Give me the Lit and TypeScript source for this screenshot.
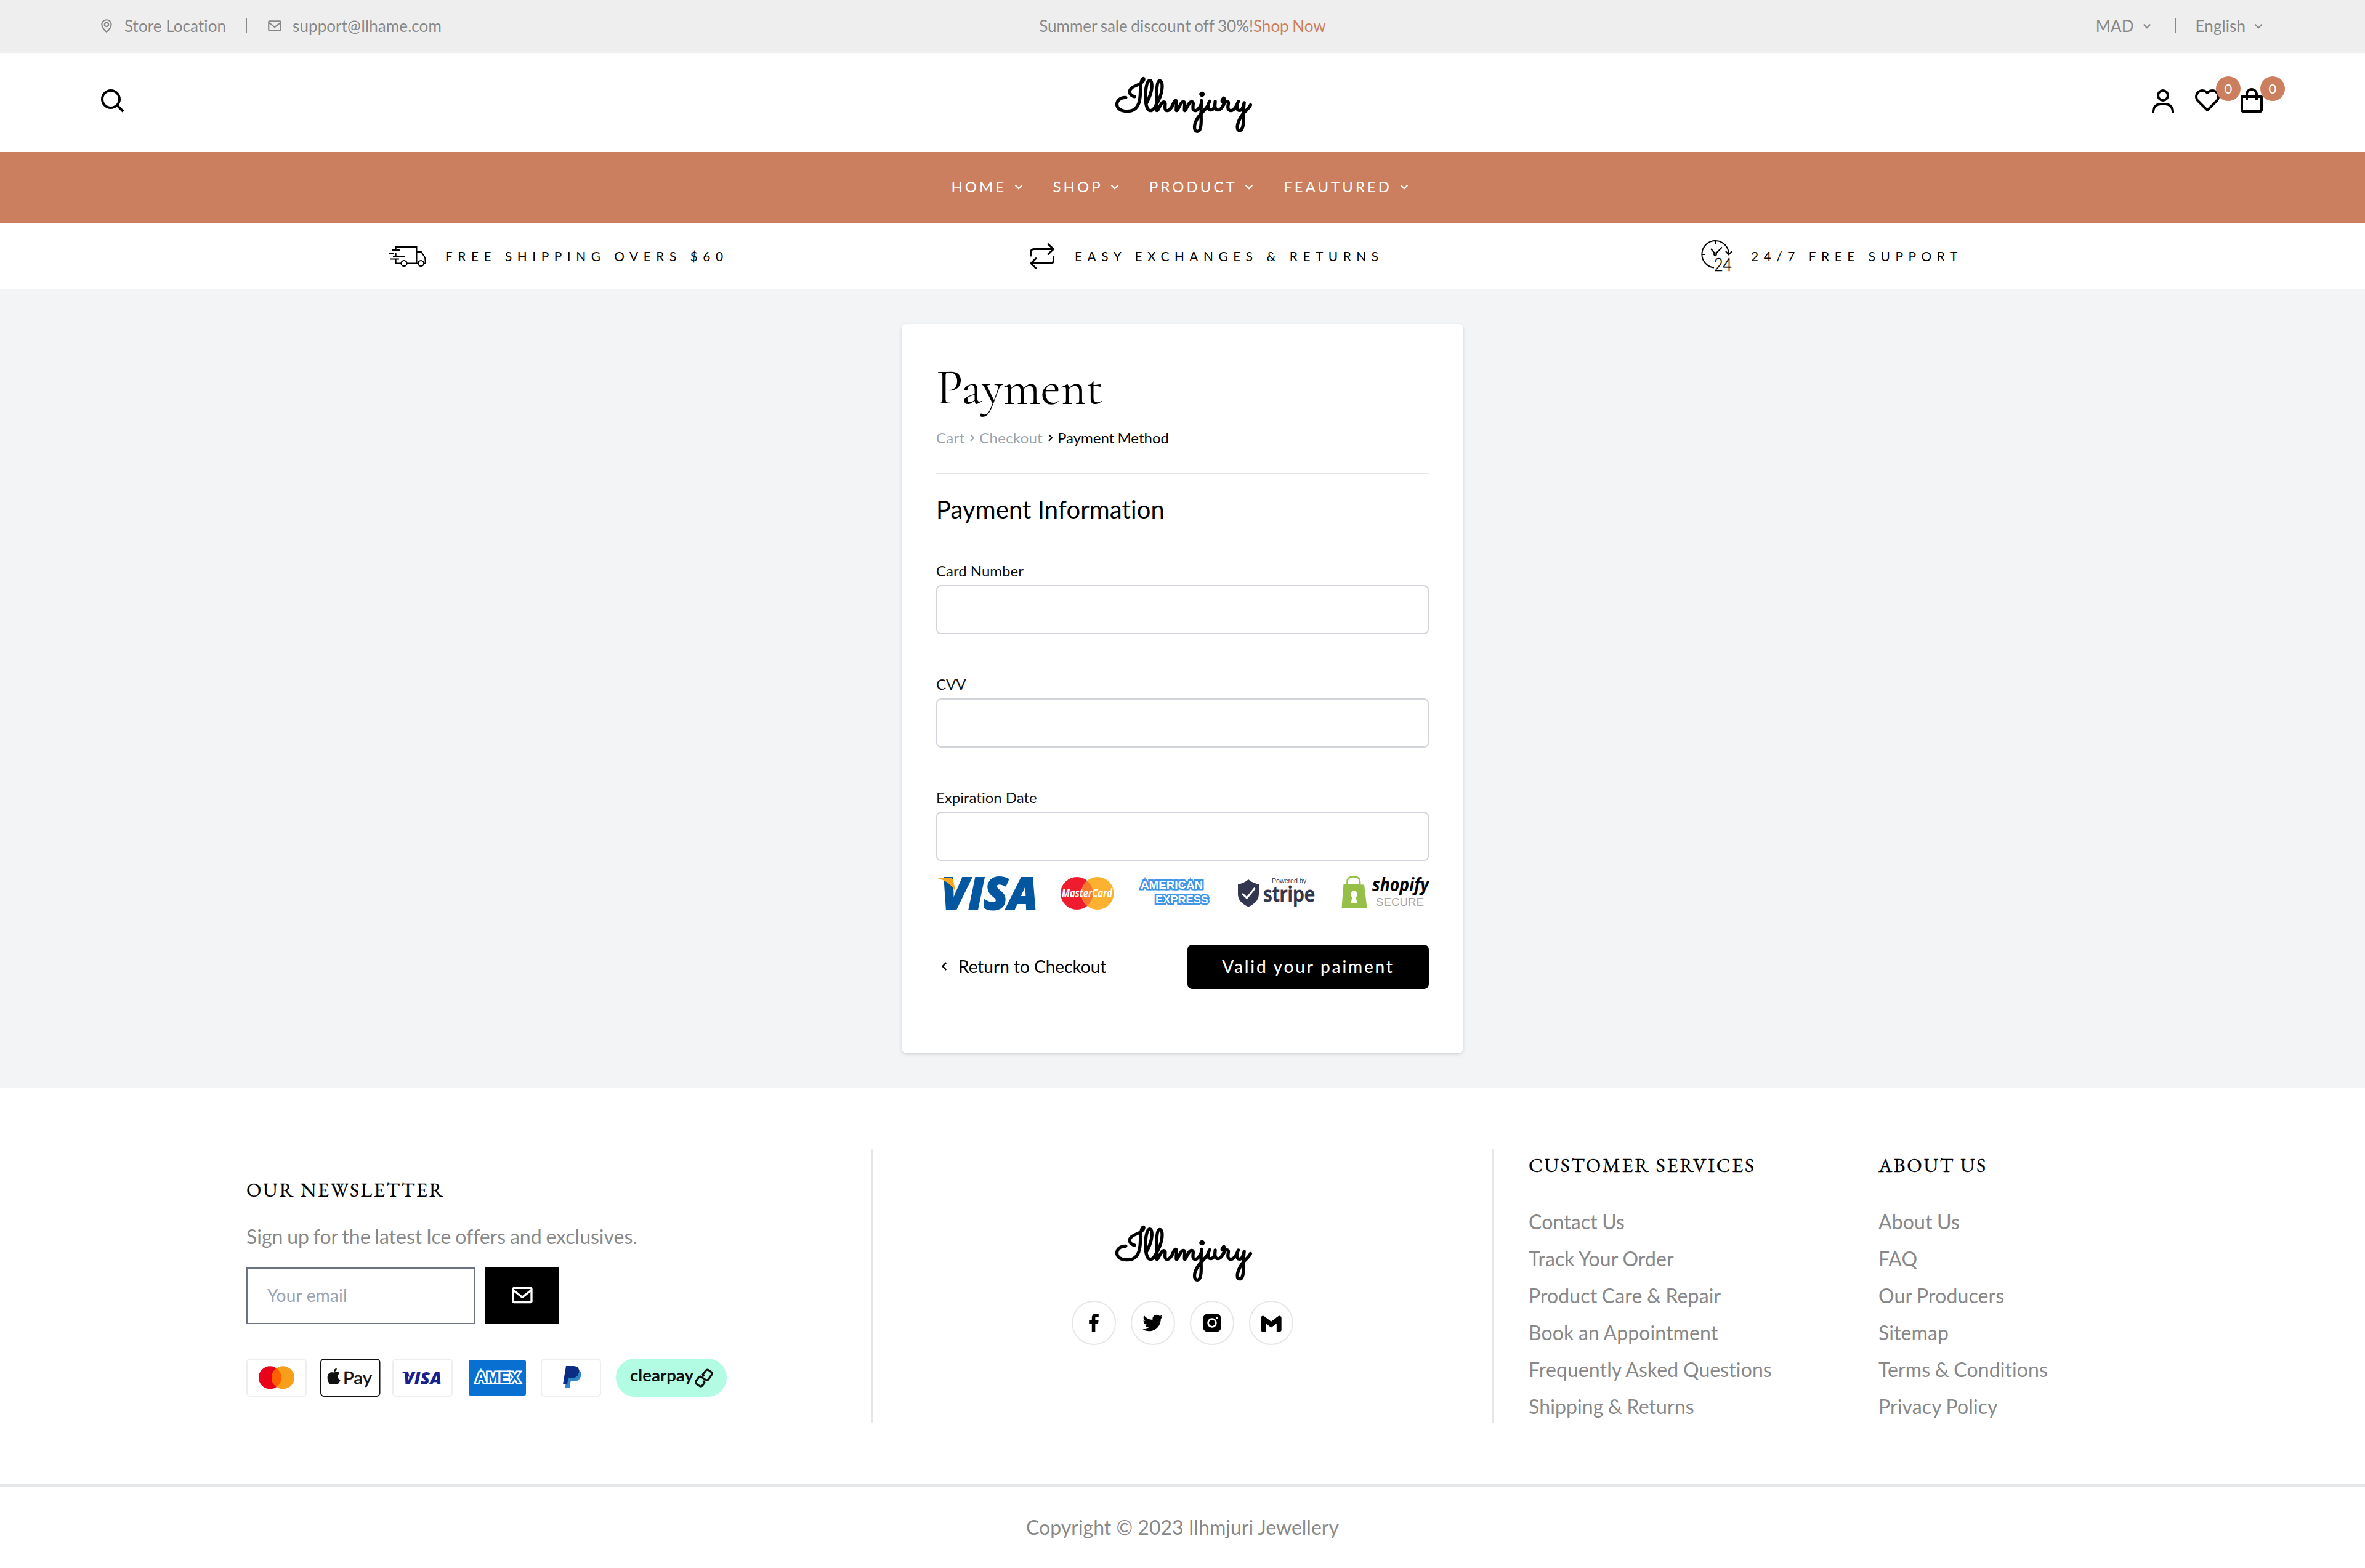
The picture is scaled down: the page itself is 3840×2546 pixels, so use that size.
import { LitElement, html, css } from "lit";
import { customElement, property } from "lit/decorators.js";
import { unsafeSVG } from "lit/directives/unsafe-svg.js";

const ICONS: Record<string, string> = {
  map: `<path d="M12 14c2.206 0 4-1.794 4-4s-1.794-4-4-4-4 1.794-4 4 1.794 4 4 4zm0-6c1.103 0 2 .897 2 2s-.897 2-2 2-2-.897-2-2 .897-2 2-2z"/><path d="M11.42 21.814a.998.998 0 0 0 1.16 0C12.884 21.599 20.029 16.44 20 10c0-4.411-3.589-8-8-8S4 5.589 4 9.995c-.029 6.445 7.116 11.604 7.42 11.819zM12 4c3.309 0 6 2.691 6 6.005.021 4.438-4.388 8.423-6 9.73-1.611-1.308-6.021-5.294-6-9.735 0-3.309 2.691-6 6-6z"/>`,
  envelope: `<path d="M20 4H4c-1.103 0-2 .897-2 2v12c0 1.103.897 2 2 2h16c1.103 0 2-.897 2-2V6c0-1.103-.897-2-2-2zm0 2v.511l-8 6.223-8-6.222V6h16zM4 18V9.044l7.386 5.745a.994.994 0 0 0 1.228 0L20 9.044 20.002 18H4z"/>`,
  down: `<path d="M16.293 9.293 12 13.586 7.707 9.293l-1.414 1.414L12 16.414l5.707-5.707z"/>`,
  right: `<path d="M10.707 17.707 16.414 12l-5.707-5.707-1.414 1.414L13.586 12l-4.293 4.293z"/>`,
  left: `<path d="M13.293 6.293 7.586 12l5.707 5.707 1.414-1.414L10.414 12l4.293-4.293z"/>`,
  search: `<path d="M10 18a7.952 7.952 0 0 0 4.897-1.688l4.396 4.396 1.414-1.414-4.396-4.396A7.952 7.952 0 0 0 18 10c0-4.411-3.589-8-8-8s-8 3.589-8 8 3.589 8 8 8zm0-14c3.309 0 6 2.691 6 6s-2.691 6-6 6-6-2.691-6-6 2.691-6 6-6z"/>`,
  user: `<path d="M12 2a5 5 0 1 0 5 5 5 5 0 0 0-5-5zm0 8a3 3 0 1 1 3-3 3 3 0 0 1-3 3zm9 11v-1a7 7 0 0 0-7-7h-4a7 7 0 0 0-7 7v1h2v-1a5 5 0 0 1 5-5h4a5 5 0 0 1 5 5v1z"/>`,
  heart: `<path d="M12 4.595a5.904 5.904 0 0 0-3.996-1.558 5.942 5.942 0 0 0-4.213 1.758c-2.353 2.363-2.352 6.059.002 8.412l7.332 7.332c.17.299.498.492.875.492a.99.99 0 0 0 .792-.409l7.415-7.415c2.354-2.354 2.354-6.049-.002-8.416a5.938 5.938 0 0 0-4.209-1.754A5.906 5.906 0 0 0 12 4.595zm6.791 1.61c1.563 1.571 1.564 4.025.002 5.588L12 18.586l-6.793-6.793c-1.562-1.563-1.561-4.017-.002-5.584.76-.756 1.754-1.172 2.799-1.172s2.035.416 2.789 1.17l.5.5a.999.999 0 0 0 1.414 0l.5-.5c1.512-1.509 4.074-1.505 5.584-.002z"/>`,
  bag: `<path d="M5 22h14c1.103 0 2-.897 2-2V9a1 1 0 0 0-1-1h-3V7c0-2.757-2.243-5-5-5S7 4.243 7 7v1H4a1 1 0 0 0-1 1v11c0 1.103.897 2 2 2zM9 7c0-1.654 1.346-3 3-3s3 1.346 3 3v1H9V7zm-4 3h2v2h2v-2h6v2h2v-2h2l.002 10H5V10z"/>`,
  facebook: `<path d="M13.397 20.997v-8.196h2.765l.411-3.209h-3.176V7.548c0-.926.258-1.56 1.587-1.56h1.684V3.127A22.336 22.336 0 0 0 14.201 3c-2.444 0-4.122 1.492-4.122 4.231v2.355H7.332v3.209h2.753v8.202h3.312z"/>`,
  twitter: `<path d="M19.633 7.997c.013.175.013.349.013.523 0 5.325-4.053 11.461-11.46 11.461-2.282 0-4.402-.661-6.186-1.809.324.037.636.05.973.05a8.07 8.07 0 0 0 5.001-1.721 4.036 4.036 0 0 1-3.767-2.793c.249.037.499.062.761.062.361 0 .724-.05 1.061-.137a4.027 4.027 0 0 1-3.23-3.953v-.05c.537.299 1.16.486 1.82.511a4.022 4.022 0 0 1-1.796-3.354c0-.748.199-1.434.548-2.032a11.457 11.457 0 0 0 8.306 4.215c-.062-.3-.1-.611-.1-.923a4.026 4.026 0 0 1 4.028-4.028c1.16 0 2.207.486 2.943 1.272a7.957 7.957 0 0 0 2.556-.973 4.02 4.02 0 0 1-1.771 2.22 8.073 8.073 0 0 0 2.319-.624 8.645 8.645 0 0 1-2.019 2.083z"/>`,
  instagram: `<path d="M20.947 8.305a6.53 6.53 0 0 0-.419-2.216 4.61 4.61 0 0 0-2.633-2.633 6.606 6.606 0 0 0-2.186-.42c-.962-.043-1.267-.055-3.709-.055s-2.755 0-3.71.055a6.606 6.606 0 0 0-2.185.42 4.607 4.607 0 0 0-2.633 2.633 6.554 6.554 0 0 0-.419 2.185c-.043.963-.056 1.268-.056 3.71s0 2.754.056 3.71c.015.748.156 1.486.419 2.187a4.61 4.61 0 0 0 2.634 2.632 6.584 6.584 0 0 0 2.185.45c.963.043 1.268.056 3.71.056s2.755 0 3.71-.056a6.59 6.59 0 0 0 2.186-.419 4.615 4.615 0 0 0 2.633-2.633c.263-.7.404-1.438.419-2.187.043-.962.056-1.267.056-3.71-.002-2.442-.002-2.752-.058-3.709zm-8.953 8.297c-2.554 0-4.623-2.069-4.623-4.623s2.069-4.623 4.623-4.623a4.623 4.623 0 0 1 0 9.246zm4.807-8.339a1.077 1.077 0 0 1-1.078-1.078 1.077 1.077 0 1 1 2.155 0c0 .596-.482 1.078-1.077 1.078z"/><circle cx="11.994" cy="11.979" r="3.003"/>`,
  gmail: `<path d="M3.3 20.4h3.4V12.6l5.3 3.9 5.3-3.9v7.8h3.4c.7 0 1.3-.6 1.3-1.3V7.1c0-1.6-1.9-2.6-3.2-1.6L12 10.7 5.2 5.5C3.9 4.5 2 5.500 2 7.1v12c0 .7.6 1.3 1.3 1.3z"/>`,
};

@customElement("shop-icon")
export class ShopIcon extends LitElement {
  @property() name = "down";
  static styles = css`
    :host { display: block; flex: none; width: 26px; height: 26px; }
    svg { display: block; width: 100%; height: 100%; fill: currentColor; }
  `;
  render() {
    return html`<svg viewBox="0 0 24 24" aria-hidden="true">${unsafeSVG(ICONS[this.name] ?? "")}</svg>`;
  }
}

@customElement("brand-logo")
export class BrandLogo extends LitElement {
  static styles = css`
    :host { display: block; width: 224px; height: 92px; }
    svg { display: block; overflow: visible; }
    .word {
      font-family: "Sacramento", "Pacifico", "Dancing Script", "Liberation Serif", cursive;
      font-size: 72px;
      stroke: #000;
      stroke-width: 2.7px;
      stroke-linejoin: round;
    }
  `;
  render() {
    return html`<svg width="224" height="92" viewBox="0 0 224 92" role="img">
      <text class="word" x="2" y="55" textLength="216" lengthAdjust="spacingAndGlyphs">Ilhmjury</text>
    </svg>`;
  }
}

@customElement("site-header")
export class SiteHeader extends LitElement {
  static styles = css`
    :host { display: block; font-family: Lato, "Liberation Sans", sans-serif; font-variant-ligatures: none; }
    .bar {
      display: grid; grid-template-columns: 1fr auto 1fr; align-items: center;
      height: 86px; box-sizing: border-box; padding: 0 160px 2px;
      background: #eee; color: #888; font-size: 26px; line-height: 40px;
    }
    .group { display: flex; align-items: center; letter-spacing: .08px; }
    .end { justify-content: flex-end; }
    .item { display: flex; align-items: center; gap: 16px; }
    .pick { display: flex; align-items: center; gap: 8px; }
    .rule { width: 2px; height: 24px; margin: 0 32px; background: #888; }
    .promo { word-spacing: -1px; }
    .accent { color: #cb7f5f; }
    .main {
      display: grid; grid-template-columns: 1fr auto 1fr; align-items: center;
      height: 160px; box-sizing: border-box; padding: 0 160px;
      background: #fff; color: #000;
    }
    .main shop-icon { width: 48px; height: 48px; }
    .find { margin-top: -2px; }
    .logo { margin: 9px 0 0 4px; }
    .tools { display: flex; justify-content: flex-end; gap: 24px; }
    .tool { position: relative; margin-top: -4px; }
    .tool.low { margin-top: -2px; }
    .badge {
      position: absolute; top: -15px; left: 38px; width: 40px; height: 40px;
      border-radius: 50%; background: #cb7f5f; color: #fff;
      font-size: 22px; line-height: 40px; text-align: center;
    }
    .nav {
      display: flex; justify-content: center; align-items: center;
      height: 116px; box-sizing: border-box; padding: 0 3px 2px 0; background: #cb7f5f; color: #fff;
      font-size: 24px; letter-spacing: 4px; gap: 43px;
    }
    .link { display: flex; align-items: center; gap: 6.5px; line-height: 40px; }
    .perks {
      display: flex; height: 108px; background: #fff; color: #000;
      font-size: 20.8px; letter-spacing: 8.57px; line-height: 40px;
      padding-left: 630px;
    }
    .perk { display: flex; align-items: center; white-space: nowrap; }
    .perk svg { display: block; flex: none; overflow: visible; }
    .ship { width: 1032px; gap: 29px; }
    .swap { width: 1098px; gap: 25px; }
    .help { gap: 27px; }
    .line { fill: none; stroke: #000; stroke-width: 2; }
    .bold { stroke-width: 3; stroke-linecap: round; stroke-linejoin: round; }
    .num { font-weight: 300; font-size: 30px; letter-spacing: 0; stroke: #000; stroke-width: .6px; }
  `;
  render() {
    return html`
      <div class="bar">
        <div class="group">
          <span class="item"><shop-icon name="map"></shop-icon>Store Location</span>
          <span class="rule"></span>
          <span class="item"><shop-icon name="envelope"></shop-icon>support@Ilhame.com</span>
        </div>
        <div class="promo">Summer sale discount off 30%!<span class="accent">Shop Now</span></div>
        <div class="group end">
          <span class="pick">MAD<shop-icon name="down"></shop-icon></span>
          <span class="rule"></span>
          <span class="pick">English<shop-icon name="down"></shop-icon></span>
        </div>
      </div>
      <div class="main">
        <shop-icon class="find" name="search"></shop-icon>
        <brand-logo class="logo"></brand-logo>
        <div class="tools">
          <div class="tool low"><shop-icon name="user"></shop-icon></div>
          <div class="tool"><shop-icon name="heart"></shop-icon><span class="badge">0</span></div>
          <div class="tool"><shop-icon name="bag"></shop-icon><span class="badge">0</span></div>
        </div>
      </div>
      <nav class="nav">
        ${["HOME", "SHOP", "PRODUCT", "FEAUTURED"].map(
          (t) => html`<span class="link">${t}<shop-icon name="down"></shop-icon></span>`
        )}
      </nav>
      <div class="perks">
        <div class="perk ship">
          <svg width="64" height="40" viewBox="630 396 64 40">
            <path class="line" d="M642.7 406V401H676.5V427M637 406H650M632 411H640M642.7 410V416M638 416H657M634 420.5H648M642.7 421V427.5H651M661 427.5H678.5M676.5 409H684L690 418 691 427.5H688"/>
            <circle class="line" cx="656" cy="427.5" r="4.6"/><circle class="line" cx="683.5" cy="427.5" r="4.6"/>
          </svg>
          FREE SHIPPING OVERS $60
        </div>
        <div class="perk swap">
          <svg width="58" height="44" viewBox="1662 394 58 44">
            <path class="line bold" d="M1674 415V409Q1674 404.500 1679 404.500H1710.500M1702 396.500L1710.500 404.500 1702 412.500M1710.500 417V423Q1710.500 427.500 1705 427.500H1674M1682 419.500L1674 427.500 1682 435.500"/>
          </svg>
          EASY EXCHANGES &amp; RETURNS
        </div>
        <div class="perk help">
          <svg width="56" height="52" viewBox="2760 390 56 52">
            <path class="line" d="M2783 434.500A21.800 21.800 0 1 1 2807 413M2802 408L2807 413.500 2812 408M2785 391V396M2763 413H2768M2778 404L2784 411M2786.500 411L2796 401.500"/>
            <circle class="line" cx="2785" cy="412.500" r="2"/>
            <text class="num" x="2783" y="440" textLength="29" lengthAdjust="spacingAndGlyphs">24</text>
          </svg>
          24/7 FREE SUPPORT
        </div>
      </div>
    `;
  }
}

@customElement("payment-card")
export class PaymentCard extends LitElement {
  static styles = css`
    :host {
      display: block; box-sizing: border-box; width: 912px; height: 1184px; padding: 56px;
      border-radius: 8px; background: #fff; color: #000;
      box-shadow: 0 2px 6px rgba(0,0,0,.1), 0 2px 4px -2px rgba(0,0,0,.1);
      font-family: Lato, "Liberation Sans", sans-serif; font-variant-ligatures: none;
    }
    .title {
      margin: 0; font-family: "Cormorant Garamond", "Liberation Serif", serif;
      font-weight: 400; font-size: 80px; line-height: 96px;
    }
    .crumbs { display: flex; align-items: center; margin-top: 16px; font-size: 24px; line-height: 34px; word-spacing: -1px; }
    .crumbs shop-icon { width: 24px; height: 24px; }
    .past { color: #9ca3af; letter-spacing: .25px; }
    .crumb { display: flex; align-items: center; }
    .rule { height: 2px; margin-top: 40px; background: #e5e7eb; }
    .heading { margin: 29px 0 0; font-weight: 400; font-size: 40px; line-height: 56px; letter-spacing: .1px; }
    .fields { display: flex; flex-direction: column; gap: 64px; margin-top: 56px; }
    .field { display: flex; flex-direction: column; gap: 7px; height: 119px; color: #111; font-size: 24px; line-height: 32px; }
    .field + .field { margin-top: 1px; }
    .box { box-sizing: border-box; width: 100%; height: 80px; border: 2px solid #d1d5db; border-radius: 8px; background: #fff; }
    .brands { display: block; margin-top: 24px; overflow: visible; }
    .actions { display: flex; justify-content: space-between; align-items: center; margin-top: 56px; font-size: 28px; }
    .back { display: flex; align-items: center; gap: 8px; margin-top: -2px; }
    .back shop-icon { width: 28px; height: 28px; }
    .submit {
      width: 392px; height: 72px; padding: 0 0 1px; border: 0; border-radius: 8px; background: #000; color: #fff;
      font: 500 28px/71px Lato, "Liberation Sans", sans-serif; letter-spacing: 2.8px;
    }
    .heavy { font-family: "Open Sans", sans-serif; font-weight: 800; font-style: italic; }
    .semi { font-family: "Open Sans", sans-serif; font-weight: 600; }
    .ital { font-family: "Open Sans", sans-serif; font-weight: 700; font-style: italic; }
    .plain { font-family: "Liberation Sans", sans-serif; }
    .amex { font-family: "Liberation Sans", sans-serif; font-weight: 700; fill: #fff; stroke: #3f95e6; stroke-width: 5px; paint-order: stroke; stroke-linejoin: miter; }
  `;
  render() {
    return html`
      <h1 class="title">Payment</h1>
      <div class="crumbs">
        <span class="crumb past">Cart<shop-icon name="right"></shop-icon></span>
        <span class="crumb past">Checkout</span>
        <span class="crumb"><shop-icon name="right"></shop-icon>Payment Method</span>
      </div>
      <div class="rule"></div>
      <h2 class="heading">Payment Information</h2>
      <div class="fields">
        ${["Card Number", "CVV", "Expiration Date"].map(
          (t) => html`<label class="field">${t}<input class="box" type="text" /></label>`
        )}
      </div>
      <svg class="brands" width="800" height="56" viewBox="0 0 800 56">
        <text class="heavy" x="8" y="54.500" font-size="73" fill="#0357a0" stroke="#0357a0" stroke-width="2" textLength="157" lengthAdjust="spacingAndGlyphs">VISA</text>
        <path d="M0 3H21Q27 3 28 9L32 27Q22 8 0 3.500Z" fill="#faa61a"/>
        <circle cx="228.500" cy="28.500" r="26.500" fill="#ee1c2e"/>
        <circle cx="262" cy="28.500" r="26.500" fill="#fcb131"/>
        <path d="M245.200 8.200a26.500 26.500 0 0 1 0 40.600a26.500 26.500 0 0 1 0-40.600z" fill="#f4792b"/>
        <text class="ital" x="204" y="35" font-size="19" fill="#fff" textLength="82" lengthAdjust="spacingAndGlyphs">MasterCard</text>
        <text class="amex" x="332" y="21" font-size="18" textLength="101" lengthAdjust="spacingAndGlyphs">AMERICAN</text>
        <text class="amex" x="356" y="45" font-size="18" textLength="86" lengthAdjust="spacingAndGlyphs">EXPRESS</text>
        <path d="M507 6Q514 12 524 14V30Q524 43 507 50.500Q490 43 490 30V14Q500 12 507 6Z" fill="#32364e"/>
        <path d="M497 29L504.500 36 517.500 20" fill="none" stroke="#fff" stroke-width="3"/>
        <text class="plain" x="545" y="12" font-size="11.500" fill="#32364e" textLength="56" lengthAdjust="spacingAndGlyphs">Powered by</text>
        <text class="semi" x="531" y="42" font-size="35" fill="#32364e" stroke="#32364e" stroke-width="1" textLength="84" lengthAdjust="spacingAndGlyphs">stripe</text>
        <path d="M667.500 15V10Q667.500 1.500 678 1.500Q688 1.500 688 10V15" fill="none" stroke="#96bf47" stroke-width="2.600"/>
        <path d="M661.500 13L695 14.500 699.500 52H658.500Z" fill="#96bf47"/>
        <circle cx="678.500" cy="30" r="5.500" fill="#fff"/><path d="M676.500 32H680.500L684 45H673Z" fill="#fff"/>
        <text class="ital" x="708" y="24.500" font-size="31" fill="#000" textLength="92" lengthAdjust="spacingAndGlyphs">shopify</text>
        <text class="plain" x="714" y="49" font-size="19" fill="#a8a8a8" textLength="78" lengthAdjust="spacingAndGlyphs">SECURE</text>
      </svg>
      <div class="actions">
        <span class="back"><shop-icon name="left"></shop-icon>Return to Checkout</span>
        <button class="submit">Valid your paiment</button>
      </div>
    `;
  }
}

const SERVICES = ["Contact Us", "Track Your Order", "Product Care & Repair", "Book an Appointment", "Frequently Asked Questions", "Shipping & Returns"];
const ABOUT = ["About Us", "FAQ", "Our Producers", "Sitemap", "Terms & Conditions", "Privacy Policy"];

@customElement("site-footer")
export class SiteFooter extends LitElement {
  static styles = css`
    :host { display: block; background: #fff; color: #888; font-family: Lato, "Liberation Sans", sans-serif; font-size: 32px; font-variant-ligatures: none; }
    .cols {
      display: grid; grid-template-columns: 1018px 1008px 1fr; grid-template-rows: 444px; height: 644px; box-sizing: border-box;
      padding: 100px 0 100px 400px;
    }
    .news, .brand { box-sizing: border-box; border-right: 4px solid #e5e7eb; }
    .news { padding-top: 42px; }
    .head {
      margin: 0; color: #000; font-family: "EB Garamond", "Cormorant Garamond", "Liberation Serif", serif;
      font-weight: 400; font-size: 32px; line-height: 48px; letter-spacing: 2.7px; -webkit-text-stroke: .3px #000;
    }
    .lead { margin: 28px 0 0; line-height: 48px; word-spacing: -1.4px; }
    .form { display: flex; gap: 16px; margin-top: 26px; }
    .mail {
      box-sizing: border-box; width: 372px; height: 92px; padding: 0 32px 2px; border: 2px solid #6b7280; border-radius: 0;
      background: #fff; font: 28px Lato, "Liberation Sans", sans-serif; letter-spacing: .2px;
    }
    .mail::placeholder { color: #9ca3af; opacity: 1; }
    .send { display: flex; align-items: center; justify-content: center; width: 120px; height: 92px; padding: 0; border: 0; background: #000; color: #fff; }
    .send shop-icon { width: 40px; height: 40px; margin-top: -3px; }
    .cards { display: block; margin-top: 56px; }
    .brand { display: flex; flex-direction: column; align-items: center; padding-top: 124px; }
    .logo { margin-left: 3px; }
    .social { display: flex; gap: 24px; margin-top: 30px; }
    .dot { display: flex; align-items: center; justify-content: center; box-sizing: border-box; width: 72px; height: 72px; border: 2px solid #e5e7eb; border-radius: 50%; color: #000; }
    .dot shop-icon { width: 40px; height: 40px; }
    .lists { display: grid; grid-template-columns: 568px 1fr; padding: 2px 0 0 56px; }
    .list { margin: 38px 0 0; padding: 0; list-style: none; line-height: 60px; letter-spacing: .1px; word-spacing: -.7px; }
    .copy { border-top: 4px solid #e5e7eb; text-align: center; line-height: 131px; height: 132px; }
    .tile { fill: #fff; stroke: #eee; stroke-width: 2; }
    .lato { font-family: Lato, sans-serif; }
    .ital { font-family: "Open Sans", sans-serif; font-weight: 800; font-style: italic; }
    .amex { font-family: "Liberation Sans", sans-serif; font-weight: 700; fill: #0770d0; stroke: #fff; stroke-width: 5px; paint-order: stroke; }
  `;
  render() {
    return html`
      <div class="cols">
        <div class="news">
          <h3 class="head">OUR NEWSLETTER</h3>
          <p class="lead">Sign up for the latest Ice offers and exclusives.</p>
          <div class="form">
            <input class="mail" placeholder="Your email" />
            <button class="send"><shop-icon name="envelope"></shop-icon></button>
          </div>
          <svg class="cards" width="780" height="62" viewBox="0 0 780 62">
            <rect class="tile" x="1" y="1" width="96" height="60" rx="5"/>
            <circle cx="38.500" cy="30.800" r="18.500" fill="#eb001b"/><circle cx="59.500" cy="30.800" r="18.500" fill="#f79e1b"/>
            <path d="M49 15.600a18.500 18.500 0 0 1 0 30.400a18.500 18.500 0 0 1 0-30.400z" fill="#ff5f00"/>
            <rect x="121" y="1" width="95.500" height="60" rx="5" fill="#fff" stroke="#111" stroke-width="2"/>
            <path d="M142 22.500c2-.2 3.500-1.200 6-.9 1.600.2 2.700 1 3.500 2.200-4.600 3-3.700 9.300 1 11.200-1 3-3.300 7-5.800 7-1.800 0-2.500-1.100-4.700-1.100s-3 1.100-4.700 1.100c-3.600 0-9-13-2.800-18.300 2.500-2 5-1.300 7.500-1.200zM142 21.500c-.3-3 2-5.700 4.800-6 .3 3-2 5.800-4.800 6z" fill="#111"/>
            <text class="lato" x="157" y="41" font-size="26" fill="#111" stroke="#111" stroke-width=".5" textLength="47" lengthAdjust="spacingAndGlyphs">Pay</text>
            <rect class="tile" x="238" y="1" width="96" height="60" rx="5"/>
            <text class="ital" x="255" y="41.500" font-size="29" fill="#1a1f8f" textLength="62" lengthAdjust="spacingAndGlyphs">VISA</text>
            <path d="M250 21H260Q263 21 263.500 24L265 31Q260 23.500 250 21.500Z" fill="#1a1f8f"/>
            <rect x="361" y="2.500" width="93" height="57.500" rx="3" fill="#0770d0"/>
            <text class="amex" x="372" y="39" font-size="23" textLength="72" lengthAdjust="spacingAndGlyphs">AMEX</text>
            <rect class="tile" x="479" y="1" width="96" height="60" rx="5"/>
            <path d="M523 17H535C542 18 545 22 543 29C541 36 535 37 529 37H526.500L525 47H517.500Z" fill="#3086c8"/>
            <path d="M519 12H531C538 12 541 16 540 22C538.500 30 533 32 526 32H522.500L521 42H514Z" fill="#0a2d83"/>
            <rect x="600" y="0" width="180" height="62" rx="31" fill="#b2fce4"/>
            <text class="lato" x="623" y="37" font-size="26" font-weight="700" fill="#111" textLength="103" lengthAdjust="spacingAndGlyphs">clearpay</text>
            <path d="M743 29L741 26 746 19.500Q748 17 751 19L755 22Q757 24 755 27L750 34Q748 36 745 34L739 30Q736 28 734 31L730 37Q729 40 732 42L736 44.500Q739 46 741 43L744 39 742 36" fill="none" stroke="#111" stroke-width="3.200" stroke-linejoin="round"/>
          </svg>
        </div>
        <div class="brand">
          <brand-logo class="logo"></brand-logo>
          <div class="social">
            ${["facebook", "twitter", "instagram", "gmail"].map((n) => html`<span class="dot"><shop-icon name=${n}></shop-icon></span>`)}
          </div>
        </div>
        <div class="lists">
          <div>
            <h3 class="head">CUSTOMER SERVICES</h3>
            <ul class="list">${SERVICES.map((t) => html`<li>${t}</li>`)}</ul>
          </div>
          <div>
            <h3 class="head">ABOUT US</h3>
            <ul class="list">${ABOUT.map((t) => html`<li>${t}</li>`)}</ul>
          </div>
        </div>
      </div>
      <div class="copy">Copyright © 2023 Ilhmjuri Jewellery</div>
    `;
  }
}

@customElement("app-root")
export class AppRoot extends LitElement {
  static styles = css`
    :host { display: block; width: 3840px; height: 2546px; overflow: hidden; background: #fff; }
    .stage { display: flex; justify-content: center; box-sizing: border-box; height: 1296px; padding-top: 56px; background: #f3f4f6; }
  `;
  render() {
    return html`
      <site-header></site-header>
      <main class="stage"><payment-card></payment-card></main>
      <site-footer></site-footer>
    `;
  }
}
